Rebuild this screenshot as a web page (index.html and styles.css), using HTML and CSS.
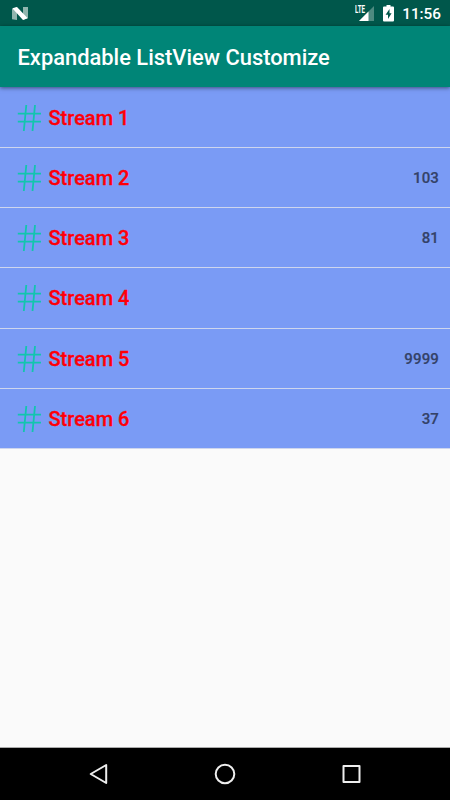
FILE: index.html
```html
<!DOCTYPE html>
<html>
<head>
  <meta charset="UTF-8">
  <title>Expandable ListView Customize</title>
  <link rel="stylesheet" href="styles.css">
</head>
<body>
  <svg class="defs" width="0" height="0">
    <symbol id="hash" viewBox="0 0 24 28">
      <path d="M9.3 1 L6.8 27 M18 1 L15.5 27 M0.8 9.6 H24 M0.8 17.7 H24"/>
    </symbol>
  </svg>

  <div class="status">
    <svg class="logo" width="16" height="13" viewBox="0 0 16 13">
      <path d="M0 2 L5 0 V13 L0 12.3 Z M11 0 L16 0 V11 L11 13 Z" fill="#90b5ae"/>
      <path d="M0.3 1.2 L5 0 L15.7 11.3 L11 13 Z" fill="#fff"/>
    </svg>
    <svg class="signal" width="20" height="17" viewBox="0 0 20 17">
      <path d="M19 1 V16 H4 Z" fill="#4d8a80"/>
      <path d="M13.5 6.5 V16 H4 Z" fill="#fff"/>
      <path d="M0 0 H12 V7 L9 9 H0 Z" fill="#00574b"/>
      <text x="0" y="7.7" textLength="10" lengthAdjust="spacingAndGlyphs">LTE</text>
    </svg>
    <svg class="battery" width="11" height="17" viewBox="0 0 11 17">
      <path d="M3.5 0 H7.5 V1.5 H10 Q11 1.5 11 2.5 V15.5 Q11 16.5 10 16.5 H1 Q0 16.5 0 15.5 V2.5 Q0 1.5 1 1.5 H3.5 Z" fill="#fff"/>
      <path d="M6.5 4 L2.6 9.8 H5 V14 L8.6 8.2 H6.5 Z" fill="#00574b"/>
    </svg>
    <span class="time">11:56</span>
  </div>

  <div class="toolbar">Expandable ListView Customize</div>

  <div class="list">
    <div class="row">
      <svg class="hash"><use href="#hash"/></svg>
      <span class="name">Stream 1</span>
    </div>
    <div class="row">
      <svg class="hash"><use href="#hash"/></svg>
      <span class="name">Stream 2</span>
      <span class="count">103</span>
    </div>
    <div class="row">
      <svg class="hash"><use href="#hash"/></svg>
      <span class="name">Stream 3</span>
      <span class="count">81</span>
    </div>
    <div class="row">
      <svg class="hash"><use href="#hash"/></svg>
      <span class="name">Stream 4</span>
    </div>
    <div class="row">
      <svg class="hash"><use href="#hash"/></svg>
      <span class="name">Stream 5</span>
      <span class="count">9999</span>
    </div>
    <div class="row">
      <svg class="hash"><use href="#hash"/></svg>
      <span class="name">Stream 6</span>
      <span class="count">37</span>
    </div>
  </div>

  <div class="navbar">
    <svg width="24" height="24" viewBox="0 0 24 24">
      <path d="M19.2 3 V21 L3.7 12 Z"/>
    </svg>
    <svg width="24" height="24" viewBox="0 0 24 24">
      <circle cx="12" cy="12" r="9.3"/>
    </svg>
    <svg width="24" height="24" viewBox="0 0 24 24">
      <rect x="4.5" y="4" width="16" height="16"/>
    </svg>
  </div>
</body>
</html>
```

FILE: styles.css
```css
body {
  margin: 0;
  height: 800px;
  display: flex;
  flex-direction: column;
  background: #fafafa;
  font-family: Roboto, sans-serif;
  overflow: hidden;
}
.defs {
  display: none;
}

.status {
  height: 26px;
  display: flex;
  align-items: center;
  padding: 0 9px 0 12px;
  background: #00574b;
}
.logo {
  margin-right: auto;
}
.signal {
  margin-right: 8px;
}
.signal text {
  font-size: 10px;
  font-weight: bold;
  fill: #fff;
}
.battery {
  margin-right: 8px;
}
.time {
  color: #fff;
  font-size: 15.3px;
  font-weight: 500;
  line-height: 26px;
  padding-top: 2px;
}

.toolbar {
  height: 61px;
  line-height: 63px;
  padding-left: 17.5px;
  background: #008577;
  color: #fff;
  font-size: 21.9px;
  font-weight: 500;
  box-shadow: 0 1px 4px rgba(0, 0, 0, 0.5);
  z-index: 1;
}

.list {
  flex: 1;
}
.row {
  height: 60.2px;
  box-sizing: border-box;
  display: flex;
  align-items: center;
  padding: 1px 11px 0 17px;
  background: #7a9bf5;
  border-bottom: 1px solid #ced6ee;
}
.row:first-child {
  height: 61px;
}
.hash {
  width: 24px;
  height: 28px;
  margin-right: 7.5px;
  fill: none;
  stroke: #12c5ae;
  stroke-width: 1.8;
}
.name {
  color: #ff0008;
  font-size: 20px;
  font-weight: 500;
  -webkit-text-stroke: 0.3px #ff0008;
}
.count {
  margin-left: auto;
  color: #344268;
  font-size: 15px;
  font-weight: 500;
  letter-spacing: 0.15px;
  -webkit-text-stroke: 0.2px #344268;
}

.navbar {
  height: 52px;
  display: flex;
  align-items: center;
  justify-content: center;
  gap: 102px;
  background: #000;
  border-top: 1px solid #aaa;
  box-sizing: content-box;
}
.navbar svg {
  fill: none;
  stroke: #eee;
  stroke-width: 2;
  stroke-linejoin: round;
}
```
